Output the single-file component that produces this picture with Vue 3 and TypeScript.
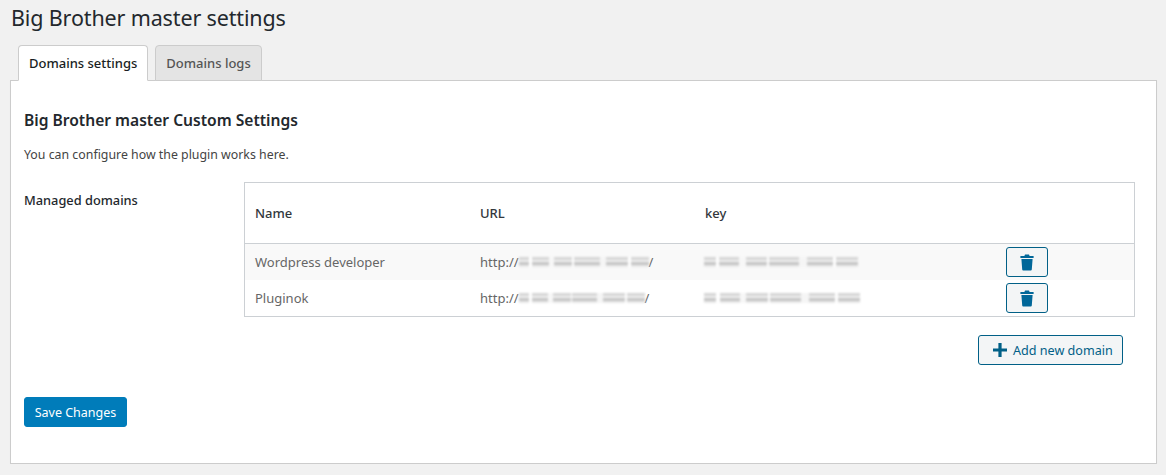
<script setup lang="ts">
interface Domain { name: string; urlWidth: number; keyWidth: number }

const domains: Domain[] = [
  { name: 'Wordpress developer', urlWidth: 130, keyWidth: 154 },
  { name: 'Pluginok', urlWidth: 126, keyWidth: 156 },
]
</script>

<template>
  <div class="wrap">
    <h1>Big Brother master settings</h1>
    <div class="tabs">
      <a class="tab active">Domains settings</a>
      <a class="tab">Domains logs</a>
    </div>
    <div class="panel">
      <h2>Big Brother master Custom Settings</h2>
      <p class="intro">You can configure how the plugin works here.</p>
      <div class="field">
        <div class="label">Managed domains</div>
        <div class="control">
          <table>
            <thead>
              <tr>
                <th class="c-name">Name</th>
                <th class="c-url">URL</th>
                <th class="c-key">key</th>
                <th></th>
              </tr>
            </thead>
            <tbody>
              <tr v-for="d in domains" :key="d.name">
                <td>{{ d.name }}</td>
                <td>
                  <span class="url">http://<i class="smear" :style="{ width: d.urlWidth + 'px' }"></i>/</span>
                </td>
                <td><i class="smear key" :style="{ width: d.keyWidth + 'px' }"></i></td>
                <td>
                  <button class="icon-btn" aria-label="Delete">
                    <svg width="14" height="17" viewBox="0 0 14 17">
                      <path fill="currentColor" d="M5 0.5h4l.6 1.4H13.6v2H.4v-2h4zM1.4 5h11.2l-.8 10.6a1 1 0 0 1-1 .9H3.2a1 1 0 0 1-1-.9z" />
                    </svg>
                  </button>
                </td>
              </tr>
            </tbody>
          </table>
          <div class="add-row">
            <button class="add-btn">
              <svg width="14" height="14" viewBox="0 0 14 14">
                <path fill="currentColor" d="M5.4 0h3.2v5.4H14v3.2H8.6V14H5.4V8.6H0V5.4h5.4z" />
              </svg>
              Add new domain
            </button>
          </div>
        </div>
      </div>
      <button class="save">Save Changes</button>
    </div>
  </div>
</template>

<style>
html, body { background: #f1f1f1; }
</style>

<style scoped>
.wrap { width: 1147px; margin-left: 10px; font-family: "Noto Sans", "Open Sans", sans-serif; font-size: 13px; color: #444; }
h1 { margin: 0; padding: 2px 0 0 1px; height: 45px; box-sizing: border-box; font-size: 21.5px; letter-spacing: -.14px; line-height: 31px; font-weight: 400; color: #23282d; }
.tabs { display: flex; gap: 7px; padding-left: 8px; height: 36px; position: relative; z-index: 1; margin-bottom: -1px; }
.tab { box-sizing: border-box; height: 36px; padding: 0 10px; line-height: 35px; font-weight: 500; color: #555; background: #e4e4e4; border: 1px solid #ccc; border-radius: 4px 4px 0 0; }
.tab.active { color: #191e23; background: #fff; border-bottom-color: #fff; }
.panel { box-sizing: border-box; height: 384px; background: #fff; border: 1px solid #ccc; box-shadow: 0 1px 1px rgba(0, 0, 0, .04); padding: 0 21px 0 13px; }
h2 { margin: 0; padding-top: 26px; font-size: 15.6px; line-height: 26px; font-weight: 600; color: #23282d; }
.intro { margin: 9px 0 0; line-height: 26px; color: #444; font-size: 12.35px; }
.field { display: flex; margin-top: 14px; }
.label { width: 220px; padding-top: 8px; line-height: 20px; font-size: 12.8px; font-weight: 500; color: #23282d; }
.control { width: 891px; }
table { width: 100%; border-collapse: separate; border-spacing: 0; border: 1px solid #ccd0d4; table-layout: fixed; }
th { height: 60px; padding: 0 10px; text-align: left; font-weight: 500; color: #32373c; border-bottom: 1px solid #ccd0d4; }
th.c-name { width: 205px; }
th.c-url { width: 205px; }
th.c-key { width: 281px; }
td { height: 36px; padding: 0 10px; color: #666; vertical-align: middle; }
tbody tr:first-child td { background: #f9f9f9; }
.url { display: inline-flex; align-items: center; }
.smear {
  display: inline-block;
  height: 10px;
  filter: blur(1px);
  background:
    linear-gradient(90deg, transparent 0 8%, #fff 8% 10%, transparent 10% 23%, #f7f7f7 23% 27%, transparent 27% 41%, #fff 41% 42%, transparent 42% 62%, #f5f5f5 62% 67%, transparent 67% 84%, #fff 84% 86%, transparent 86%),
    linear-gradient(180deg, #d6d6d6 0 3px, #f0f0f0 3px 5px, #c6c6c6 5px 8px, #e8e8e8 8px);
}
.smear.key { display: block; margin-left: -1px; }
.icon-btn { display: flex; align-items: center; justify-content: center; width: 42px; height: 30px; padding: 0; color: #006799; background: #f3f5f6; border: 1px solid #016087; border-radius: 3px; }
.add-row { display: flex; justify-content: flex-end; padding: 18px 12px 0 0; }
.add-btn { display: flex; align-items: center; gap: 6px; box-sizing: border-box; width: 145px; height: 30px; padding: 0 0 0 14px; font: inherit; font-size: 12.6px; color: #016087; background: #f3f5f6; border: 1px solid #016087; border-radius: 3px; }
.save { display: block; margin-top: 32px; width: 103px; height: 30px; padding: 0; font: inherit; font-size: 12.5px; color: #fff; background: #007cba; border: 1px solid #007cba; border-radius: 3px; }
</style>
